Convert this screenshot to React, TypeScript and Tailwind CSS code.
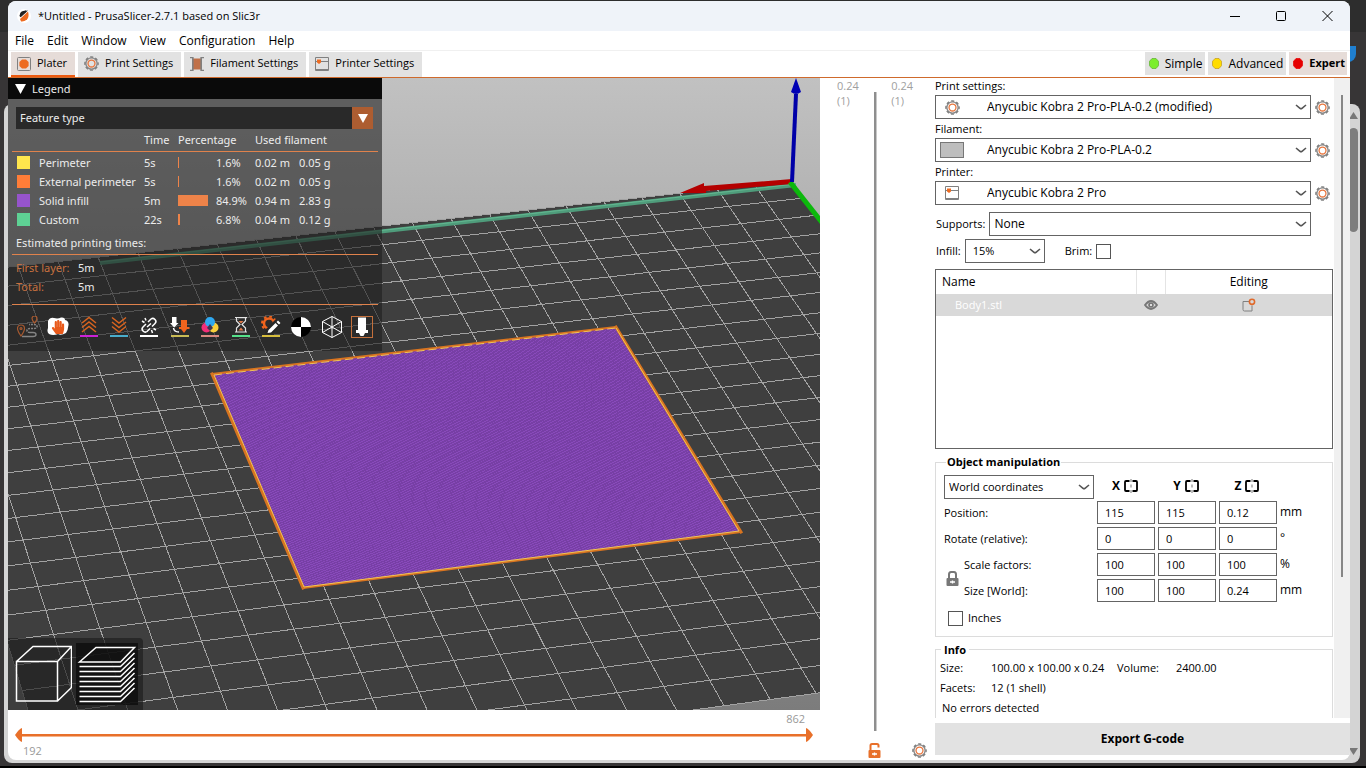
import { useState } from 'react'
import type { ReactNode } from 'react'
import { FaHandPaper } from 'react-icons/fa'

type Pt = [number, number]

const MENUS = ['File', 'Edit', 'Window', 'View', 'Configuration', 'Help']

const FEATURES = [
  { name: 'Perimeter', swatch: 'bg-[#ffe64d]', time: '5s', pct: 1.6, m: '0.02 m', g: '0.05 g' },
  { name: 'External perimeter', swatch: 'bg-[#ff7d38]', time: '5s', pct: 1.6, m: '0.02 m', g: '0.05 g' },
  { name: 'Solid infill', swatch: 'bg-[#9654cc]', time: '5m', pct: 84.9, m: '0.94 m', g: '2.83 g' },
  { name: 'Custom', swatch: 'bg-[#5ed194]', time: '22s', pct: 6.8, m: '0.04 m', g: '0.12 g' }
]

const ROWS = [
  { label: 'Position:', values: ['115', '115', '0.12'], unit: 'mm' },
  { label: 'Rotate (relative):', values: ['0', '0', '0'], unit: '°' },
  { label: 'Scale factors:', values: ['100', '100', '100'], unit: '%' },
  { label: 'Size [World]:', values: ['100', '100', '0.24'], unit: 'mm' }
]

const AXES = ['X', 'Y', 'Z']

/** Perspective map from the four screen corners of a w × h rectangle on the bed. */
function makeProjector(w: number, h: number, p00: Pt, p10: Pt, p11: Pt, p01: Pt): (x: number, y: number) => Pt {
  const dx1 = p10[0] - p11[0]
  const dy1 = p10[1] - p11[1]
  const dx2 = p01[0] - p11[0]
  const dy2 = p01[1] - p11[1]
  const sx = p00[0] - p10[0] + p11[0] - p01[0]
  const sy = p00[1] - p10[1] + p11[1] - p01[1]
  const den = dx1 * dy2 - dx2 * dy1
  const g = (sx * dy2 - dx2 * sy) / den
  const k = (dx1 * sy - sx * dy1) / den
  return (x, y) => {
    const u = x / w
    const v = y / h
    const q = 1 + g * u + k * v
    return [
      (p00[0] + (p10[0] - p00[0] + g * p10[0]) * u + (p01[0] - p00[0] + k * p01[0]) * v) / q,
      (p00[1] + (p10[1] - p00[1] + g * p10[1]) * u + (p01[1] - p00[1] + k * p01[1]) * v) / q
    ]
  }
}

const bed = makeProjector(200, 190, [784, 103], [10, 188], [156, 594], [1055, 477])
const part = makeProjector(100, 100, [608, 249], [205, 296], [294, 510], [732, 454])

const fmt = (p: Pt): string => `${p[0].toFixed(1)} ${p[1].toFixed(1)}`
const BED = 230

let gridPath = ''
for (let i = 0; i <= BED; i += 10) {
  gridPath += `M${fmt(bed(i, 0))}L${fmt(bed(i, BED))}M${fmt(bed(0, i))}L${fmt(bed(BED, i))}`
}

// solid infill, one diagonal per extrusion
let infillPath = ''
for (let s = 0.9; s < 200; s += 0.9) {
  const a = Math.min(s, 100)
  infillPath += `M${fmt(part(a, s - a))}L${fmt(part(s - a, a))}`
}

function Scene(): ReactNode {
  return (
    <svg viewBox="0 0 812 632" preserveAspectRatio="xMinYMin slice" className="absolute inset-0 h-full w-full" aria-hidden="true">
      <defs>
        <linearGradient id="sky" x1="0" y1="0" x2="0" y2="1">
          <stop offset="0" stopColor="#c1c1c1" />
          <stop offset="1" stopColor="#7c7c7c" />
        </linearGradient>
      </defs>
      <rect width="812" height="632" fill="url(#sky)" />
      <path d={`M${fmt(bed(0, 0))}L${fmt(bed(BED, 0))}L${fmt(bed(BED, BED))}L${fmt(bed(0, BED))}Z`} fill="#3f3f3f" />
      <path d={gridPath} stroke="#a2a2a2" strokeWidth="1" fill="none" shapeRendering="crispEdges" />
      <path d="M92 185L788 107" stroke="#4f9c7b" strokeWidth="4" />
      <path d="M92 184L788 106" stroke="#63b791" strokeWidth="1" />
      <path d="M784 101L696 108L696 105L672 115L698 115L698 113L784 106Z" fill="#b40000" />
      <path d="M782 104L816 147" stroke="#0cb80c" strokeWidth="5" />
      <path d="M784 104L788 16" stroke="#0000a8" strokeWidth="4" />
      <path d="M788 0L793 14Q788 18 783 14Z" fill="#0000b4" />
      <path d="M205 296L608 249L732 454L294 510Z" fill="#894abb" />
      <path d={infillPath} stroke="#6f3a9b" strokeWidth="1" fill="none" opacity="0.7" shapeRendering="crispEdges" />
      <path d="M204 296L608 249M733 454L295 510" fill="none" stroke="#d87420" strokeWidth="2" />
      <path d="M204 296L295 510M608 249L733 454" fill="none" stroke="#d87420" strokeWidth="3" strokeLinecap="square" />
      <path d="M206 297L608 250" fill="none" stroke="#f2c552" strokeWidth="1" strokeDasharray="8 4" />
      <path d="M608 250L731 453L296 509L206 297" fill="none" stroke="#f2c552" strokeWidth="1" />
    </svg>
  )
}

function GearIcon(): ReactNode {
  return (
    <svg width="15" height="15" viewBox="0 0 16 16" fill="none" aria-hidden="true" className="shrink-0">
      <circle cx="8" cy="8" r="7" stroke="#808080" strokeWidth="1.6" strokeDasharray="3.2 2.3" strokeDashoffset="1.6" />
      <circle cx="8" cy="8" r="6" stroke="#858585" strokeWidth="1.4" />
      <circle cx="8" cy="8" r="3.7" stroke="#e8773f" strokeWidth="1.4" />
    </svg>
  )
}

function PlaterIcon(): ReactNode {
  return (
    <svg width="14" height="14" viewBox="0 0 14 14" aria-hidden="true" className="shrink-0">
      <rect x="0.5" y="0.5" width="13" height="13" rx="1" fill="none" stroke="#808080" />
      <path d="M5 2.4H9L11.6 5V9L9 11.6H5L2.4 9V5Z" fill="#ed6b21" />
    </svg>
  )
}

function SpoolIcon(): ReactNode {
  return (
    <svg width="14" height="14" viewBox="0 0 14 14" aria-hidden="true" className="shrink-0">
      <rect x="2" y="1.5" width="10" height="11" fill="#c07048" />
      <path d="M0 0.7H3V13.3H0M14 0.7H11V13.3H14" fill="none" stroke="#808080" strokeWidth="1.2" />
      <path d="M2.6 0V14M11.4 0V14" stroke="#808080" strokeWidth="1" />
    </svg>
  )
}

function PrinterIcon(): ReactNode {
  return (
    <svg width="14" height="14" viewBox="0 0 14 14" aria-hidden="true" className="shrink-0">
      <path d="M0.5 0.5H13.5V13.5H0.5ZM0.5 4.5H13.5M0.5 12.5H13.5" fill="none" stroke="#808080" />
      <path d="M2 2.5H6V5.5L4 7L2 5.5Z" fill="#ed6b21" />
    </svg>
  )
}

function LockIcon({ open = false, color }: { open?: boolean; color: string }): ReactNode {
  return (
    <svg width="13" height="15" viewBox="0 0 13 15" aria-hidden="true" className="shrink-0">
      <path d={open ? 'M2.5 8V2.5Q2.5 1 4 1H9Q10.5 1 10.5 2.5V4.5' : 'M3 8V3.5Q3 1 5 1H8Q10 1 10 3.5V8'} fill="none" stroke={color} strokeWidth="2" />
      <rect x="0.5" y="7" width="12" height="8" rx="1" fill={color} />
      <path d="M4 11H9M6.5 9.6V12.4" stroke="#fff" strokeWidth="1.4" />
    </svg>
  )
}

function MirrorIcon(): ReactNode {
  return (
    <svg width="14" height="14" viewBox="0 0 14 14" fill="none" aria-hidden="true">
      <path d="M5.5 2H2Q1 2 1 3V11Q1 12 2 12H5.5M8.5 2H12Q13 2 13 3V11Q13 12 12 12H8.5" stroke="#000" strokeWidth="1.8" />
      <path d="M7 0V3M7 5.5V8.5M7 11V14" stroke="#777" strokeWidth="1" />
    </svg>
  )
}

function Chevron(): ReactNode {
  return (
    <svg width="12" height="6" viewBox="0 0 12 6" fill="none" aria-hidden="true" className="pointer-events-none absolute top-[9px] right-1">
      <path d="M1 1L5 4.3Q6 5 7 4.3L11 1" stroke="#555" strokeWidth="1.6" />
    </svg>
  )
}

function PresetRow({ id, label, value, icon }: { id: string; label: string; value: string; icon: ReactNode }): ReactNode {
  return (
    <div className="mb-0.5">
      <label htmlFor={id} className="block h-[17px] leading-[16px]">
        {label}
      </label>
      <div className="flex items-center gap-[4px]">
        <div className="relative flex-1">
          <select id={id} className="block h-6 w-full appearance-none border border-[#646464] bg-white pl-[51px] text-[12px] leading-[20px]">
            <option>{value}</option>
          </select>
          <span className="pointer-events-none absolute inset-y-0 left-1 flex w-[26px] items-center justify-center">{icon}</span>
          <Chevron />
        </div>
        <button type="button" aria-label={`Edit ${label}`}>
          <GearIcon />
        </button>
      </div>
    </div>
  )
}

function ModeButton({ dot, edge, label, active = false }: { dot: string; edge: string; label: string; active?: boolean }): ReactNode {
  return (
    <button
      type="button"
      className={`flex h-[23px] items-center gap-[6px] pl-1 ${active ? 'bg-[#e6dcd8] pr-[2px] text-[11px] font-bold' : 'bg-[#e2e2e2] pr-[3px] text-[12px]'}`}
    >
      <svg width="10" height="11" viewBox="0 0 10 11" aria-hidden="true">
        <path d="M3 0.5H7L9.5 3.3V7.7L7 10.5H3L0.5 7.7V3.3Z" fill={dot} stroke={edge} strokeWidth="0.7" />
      </svg>
      {label}
    </button>
  )
}

const TOOL_ICONS: { name: string; art: ReactNode }[] = [
  {
    name: 'Travel',
    art: (
      <g fill="none" stroke="#a85a30" strokeWidth="1.2">
        <path d="M4 20Q0.5 15 0.5 12.5A3.5 3.5 0 0 1 7.5 12.5Q7.5 15 4 20Z" />
        <circle cx="4" cy="12.5" r="1" />
        <path d="M17.5 7Q15 4 15 2.5A2.5 2.5 0 0 1 20 2.5Q20 4 17.5 7Z" />
        <path d="M5 20.5H16Q19 20.5 19 18.5T16 16.5H13" stroke="#858585" strokeWidth="1.4" />
        <path d="M13 16.5Q10 16.5 10 14.5T13 12.5H17Q20 12.5 20 10.5T17 8.5H12" stroke="#858585" strokeDasharray="2 1" strokeWidth="1.5" />
      </g>
    )
  },
  {
    name: 'Wipe',
    art: (
      <g>
        <path d="M1 5Q3 1 7 2Q11 3 14 1.5Q18 1 18 4Q22 5 21.5 9Q21 14 19 17Q14 20 11 18Q6 20 2 18Q-0.5 16 1 12Z" fill="#fff" />
        <FaHandPaper x="4" y="4" size={14} color="#e8591a" />
      </g>
    )
  },
  {
    name: 'Retractions',
    art: (
      <g fill="none" stroke="#d9641f" strokeWidth="1.5">
        <path d="M4 7L11 1.5L18 7M4 11.5L11 6L18 11.5M4 16L11 10.5L18 16" />
        <path d="M2 20H20" stroke="#cc22d6" strokeWidth="2" />
      </g>
    )
  },
  {
    name: 'Deretractions',
    art: (
      <g fill="none" stroke="#d9641f" strokeWidth="1.5">
        <path d="M4 1.5L11 7L18 1.5M4 6L11 11.5L18 6M4 10.5L11 16L18 10.5" />
        <path d="M2 20H20" stroke="#49adcb" strokeWidth="2" />
      </g>
    )
  },
  {
    name: 'Seams',
    art: (
      <g fill="none" stroke="#fff" strokeWidth="1.5">
        <path d="M10 6L13 3Q15 1.5 17 3.5T17 7.5L14 10.5M12 12.5L9 15.5Q7 17 5 15T5 11L8 8" />
        <path d="M9 11L13 7.5M4 5L6.5 6.5M7 2L8 4.5M15.5 12.5L18 14M13.5 14L14.5 17" />
        <path d="M2 20H20" strokeWidth="2" />
      </g>
    )
  },
  {
    name: 'Tool changes',
    art: (
      <g>
        <path d="M3 1H7.5V7H9.5L5.2 11.5L1 7H3Z" fill="#fff" />
        <path d="M12 4H18V11H20.5V13H18L15 17L12 13H10V11H12Z" fill="#f0641e" />
        <path d="M4.5 12Q5 16 10 16" stroke="#fff" strokeWidth="1.5" fill="none" />
        <path d="M2 20H20" stroke="#c9bb55" strokeWidth="2" />
      </g>
    )
  },
  {
    name: 'Color changes',
    art: (
      <g>
        <circle cx="7.5" cy="11.5" r="5" fill="#f22d78" />
        <circle cx="14.5" cy="11.5" r="5" fill="#f9cf3c" />
        <circle cx="11" cy="6" r="5" fill="#2fa8f0" />
        <path d="M11 8L14 12L11 15L8 12Z" fill="#3c3454" />
        <path d="M2 20H20" stroke="#d98a80" strokeWidth="2" />
      </g>
    )
  },
  {
    name: 'Pause prints',
    art: (
      <g fill="none" stroke="#e4e4e4" strokeWidth="1.2">
        <path d="M5 1.5H17M5 16H17M6.5 2V5L10 8.5L6.5 12V16M15.5 2V5L12 8.5L15.5 12V16" />
        <path d="M8.5 5H13.5L11 7.5ZM8.5 14.5L11 11.5L13.5 14.5Z" fill="#e07a4a" stroke="none" />
        <path d="M2 20H20" stroke="#55e08a" strokeWidth="2" />
      </g>
    )
  },
  {
    name: 'Custom G-codes',
    art: (
      <g>
        <circle cx="9" cy="7.5" r="5" fill="none" stroke="#f0641e" strokeWidth="2.5" />
        <circle cx="9" cy="7.5" r="7" fill="none" stroke="#f0641e" strokeWidth="2" strokeDasharray="2.7 2.8" />
        <path d="M6 13L16 3L21 8L12 18L5 18Z" fill="#262626" />
        <path d="M8.5 14L15.5 7L18 9.5L11 16.5L7.5 17ZM16.5 6L18 4.5L20.5 7L19 8.5Z" fill="#fff" />
        <path d="M2 20H20" stroke="#d6bd3d" strokeWidth="2" />
      </g>
    )
  },
  {
    name: 'Center of gravity',
    art: (
      <g>
        <circle cx="11" cy="11" r="10" fill="#000" />
        <path d="M11 11V1A10 10 0 0 1 21 11ZM11 11V21A10 10 0 0 1 1 11Z" fill="#fff" />
      </g>
    )
  },
  {
    name: 'Shells',
    art: (
      <g fill="none" stroke="#fff" strokeWidth="1">
        <path d="M11 0.5L20.5 5.5V16.5L11 21.5L1.5 16.5V5.5Z" />
        <path d="M11 0.5V21.5M1.5 5.5L20.5 16.5M20.5 5.5L1.5 16.5" />
      </g>
    )
  },
  {
    name: 'Tool marker',
    art: (
      <g>
        <rect x="0.5" y="0.5" width="21" height="21" fill="none" stroke="#c4703c" />
        <path d="M7 1.5H15V14H17V17H14L12.5 20H9.5L8 17H5V14H7Z" fill="#fff" />
      </g>
    )
  }
]

function Legend(): ReactNode {
  return (
    <section className="absolute top-0 left-0 w-[374px] bg-[#1e1e1e]/60 font-['Noto_Sans',sans-serif] text-[11px] text-[#ececec]">
      <button type="button" className="flex h-[21px] w-full items-center gap-[6px] bg-[#0a0a0a] pt-px pl-[7px]">
        <svg width="11" height="10" viewBox="0 0 11 10" aria-hidden="true">
          <path d="M0 0H11L5.5 10Z" fill="#fff" />
        </svg>
        Legend
      </button>
      <div className="relative mt-2 mr-[9px] ml-2">
        <select aria-label="View type" className="block h-[22px] w-full appearance-none bg-[#292929] pl-1 text-[11px]">
          <option>Feature type</option>
        </select>
        <span className="pointer-events-none absolute inset-y-0 right-0 flex w-[21px] items-center justify-center bg-[#ad5d31]">
          <svg width="10" height="9" viewBox="0 0 10 9" aria-hidden="true">
            <path d="M0 0H10L5 9Z" fill="#fff" />
          </svg>
        </span>
      </div>
      <div className="mx-1">
        <table className="w-full table-fixed text-left">
          <colgroup>
            <col className="w-[27px]" />
            <col className="w-[105px]" />
            <col className="w-[34px]" />
            <col className="w-[38px]" />
            <col className="w-[39px]" />
            <col className="w-[44px]" />
            <col />
          </colgroup>
          <thead>
            <tr className="h-[22px] border-b border-[#e0824c]">
              <th className="p-0" />
              <th className="p-0" />
              <th className="p-0 font-normal">Time</th>
              <th className="p-0 font-normal" colSpan={2}>
                Percentage
              </th>
              <th className="p-0 font-normal" colSpan={2}>
                Used filament
              </th>
            </tr>
          </thead>
          <tbody>
            {FEATURES.map((f) => (
              <tr key={f.name} className="h-[19px]">
                <td className="pt-0.5 pl-[5px]">
                  <div className={`h-[13px] w-[13px] ${f.swatch}`} />
                </td>
                <td className="pt-0.5 leading-[17px] whitespace-nowrap">{f.name}</td>
                <td className="pt-0.5 leading-[17px]">{f.time}</td>
                <td className="pt-0.5">
                  <div className="h-[11px] min-w-px bg-[#ee8349]" style={{ width: Math.round((f.pct / 84.9) * 30) }} />
                </td>
                <td className="pt-0.5 leading-[17px]">{f.pct}%</td>
                <td className="pt-0.5 leading-[17px]">{f.m}</td>
                <td className="pt-0.5 leading-[17px]">{f.g}</td>
              </tr>
            ))}
          </tbody>
        </table>
        <h3 className="mt-1 h-[23px] border-b border-[#e0824c] pl-1 leading-[22px]">Estimated printing times:</h3>
        <dl className="grid h-[50px] grid-cols-[62px_1fr] content-start border-b border-[#e0824c] pt-[3px] pl-1 leading-[19px]">
          <dt className="text-[#c8713f]">First layer:</dt>
          <dd>5m</dd>
          <dt className="text-[#c8713f]">Total:</dt>
          <dd>5m</dd>
        </dl>
        <div className="mx-[5px] flex justify-between pt-[11px] pb-[13px]">
          {TOOL_ICONS.map((t) => (
            <button key={t.name} type="button" aria-label={t.name}>
              <svg width="22" height="22" viewBox="0 0 22 22" aria-hidden="true" className="block">
                {t.art}
              </svg>
            </button>
          ))}
        </div>
      </div>
    </section>
  )
}

function ViewSwitch(): ReactNode {
  const layers = Array.from({ length: 8 }, (_, i) => 20 + i * 5)
  return (
    <div className="absolute bottom-0 left-0 flex h-[72px] gap-1 rounded-tr bg-[#1c1c1c]/65 py-[5px] pr-[5px] pl-1.5">
      <button type="button" aria-label="3D editor view">
        <svg width="58" height="62" viewBox="0 0 58 62" fill="none" stroke="#fff" strokeWidth="1.5" aria-hidden="true">
          <path d="M2.5 18.5H43.5V58H2.5ZM2.5 18.5L19 3.5H57.5L43.5 18.5M57.5 3.5V44.5L43.5 58" />
        </svg>
      </button>
      <button type="button" aria-label="Preview" className="bg-[#0c0c0c]/80">
        <svg width="62" height="62" viewBox="0 0 62 62" fill="none" stroke="#fff" strokeWidth="1.5" aria-hidden="true">
          <path d="M3.5 19L20 4.5H58.5L44.5 19Z" />
          {layers.map((y) => (
            <path key={y} d={`M3.5 ${y + 3.5}H44.5L58.5 ${y - 10}`} />
          ))}
        </svg>
      </button>
    </div>
  )
}

function ObjectManipulation(): ReactNode {
  return (
    <fieldset className="mt-[4px] mr-px border border-[#dcdcdc] px-2 pb-[9px]">
      <legend className="ml-0.5 px-[1px] leading-[18px] font-bold">Object manipulation</legend>
      <div className="mt-1 grid grid-cols-[17px_130px_58px_58px_58px_1fr] gap-x-[3px] gap-y-0.5">
        <div className="relative col-span-2">
          <select aria-label="Coordinate system" className="block h-6 w-full appearance-none border border-[#646464] bg-white pl-1 leading-[20px]">
            <option>World coordinates</option>
          </select>
          <Chevron />
        </div>
        {AXES.map((a) => (
          <div key={a} className="flex items-center justify-center gap-1 pr-0.5 pb-0.5 text-[12px] font-bold">
            {a}
            <button type="button" aria-label={`Mirror ${a}`}>
              <MirrorIcon />
            </button>
          </div>
        ))}
        <span />
        {ROWS.map((row, i) => [
          i === 2 && (
            <button key="lock" type="button" aria-label="Lock scale" className="row-span-2 flex items-center justify-center">
              <LockIcon color="#777" />
            </button>
          ),
          <span key={row.label} className={`leading-6 ${i < 2 ? 'col-span-2' : ''}`}>
            {row.label}
          </span>,
          ...row.values.map((v, k) => (
            <input
              key={`${row.label}${AXES[k]}`}
              aria-label={`${row.label} ${AXES[k]}`}
              defaultValue={v}
              className="h-[23px] w-full border border-[#646464] bg-white px-[7px] outline-none"
            />
          )),
          <span key={`${row.label}unit`} className="text-[12px] leading-[22px]">
            {row.unit}
          </span>
        ])}
      </div>
      <label className="mt-[7px] ml-[4px] flex items-center gap-[5px]">
        <input type="checkbox" className="h-[15px] w-[15px] appearance-none border border-[#555] bg-white" />
        Inches
      </label>
    </fieldset>
  )
}

function Sidebar(): ReactNode {
  return (
    <aside className="flex w-[415px] shrink-0 flex-col pb-[5px] text-[11px]">
      <div className="flex min-h-0 flex-1">
        <div className="flex min-w-0 flex-1 flex-col overflow-hidden">
          <div className="mr-1">
            <PresetRow id="print" label="Print settings:" value="Anycubic Kobra 2 Pro-PLA-0.2 (modified)" icon={<GearIcon />} />
            <PresetRow
              id="filament"
              label="Filament:"
              value="Anycubic Kobra 2 Pro-PLA-0.2"
              icon={<span className="h-4 w-6 border border-[#777] bg-[#bebebe]" />}
            />
            <PresetRow id="printer" label="Printer:" value="Anycubic Kobra 2 Pro" icon={<PrinterIcon />} />
          </div>
          <div className="mt-[5px] mr-[23px] flex items-center gap-1 pl-px">
            <label htmlFor="supports">Supports:</label>
            <div className="relative flex-1">
              <select id="supports" className="block h-6 w-full appearance-none border border-[#646464] bg-white pl-1 text-[12px] leading-[20px]">
                <option>None</option>
              </select>
              <Chevron />
            </div>
          </div>
          <div className="mt-[3px] flex items-center gap-1 pl-px">
            <label htmlFor="infill">Infill:</label>
            <div className="relative w-20">
              <select id="infill" className="block h-6 w-full appearance-none border border-[#646464] bg-white pl-[7px] leading-[20px]">
                <option>15%</option>
              </select>
              <Chevron />
            </div>
            <label className="ml-4 flex items-center gap-1">
              Brim:
              <input type="checkbox" className="h-[15px] w-[15px] appearance-none border border-[#555] bg-white" />
            </label>
          </div>

          <div className="mt-1.5 mr-px h-[180px] shrink-0 border border-[#646464] text-[12px]">
            <table className="w-full table-fixed">
              <colgroup>
                <col />
                <col className="w-[29px]" />
                <col className="w-[167px]" />
              </colgroup>
              <thead>
                <tr className="h-6 text-left">
                  <th className="border-r border-[#e4e4e4] py-0 pl-1.5 font-normal">Name</th>
                  <th className="border-r border-[#e4e4e4] p-0" />
                  <th className="p-0 text-center font-normal">Editing</th>
                </tr>
              </thead>
              <tbody>
                <tr className="h-[22px] bg-[#d9d9d9]">
                  <td className="py-0 pl-[19px] text-[11px] text-white">Body1.stl</td>
                  <td className="p-0">
                    <svg width="14" height="10" viewBox="0 0 14 10" className="mx-auto" aria-hidden="true">
                      <path d="M1 5Q7 -3 13 5Q7 13 1 5Z" fill="#d9d9d9" stroke="#777" strokeWidth="1.8" />
                      <circle cx="7" cy="5" r="2.8" fill="#777" />
                      <circle cx="7" cy="5" r="1" fill="#fff" />
                    </svg>
                  </td>
                  <td className="p-0">
                    <svg width="14" height="14" viewBox="0 0 14 14" fill="none" className="mx-auto" aria-hidden="true">
                      <path d="M7 3.5H1V11.5Q1 13 2.5 13H10V7.5" stroke="#808080" />
                      <circle cx="10" cy="3.8" r="2.6" stroke="#e06a2c" strokeWidth="1.6" />
                    </svg>
                  </td>
                </tr>
              </tbody>
            </table>
          </div>

          <ObjectManipulation />

          <fieldset className="mt-[5px] mr-px shrink-0 border border-[#dcdcdc] px-1 pb-5">
            <legend className="ml-[1px] px-[3px] leading-4 font-bold">Info</legend>
            <div className="grid grid-cols-[51px_126px_59px_1fr] leading-5 whitespace-nowrap">
              <span>Size:</span>
              <span>100.00 x 100.00 x 0.24</span>
              <span>Volume:</span>
              <span>2400.00</span>
              <span>Facets:</span>
              <span className="col-span-3">12 (1 shell)</span>
            </div>
            <p className="pl-0.5 leading-5">No errors detected</p>
          </fieldset>
        </div>
        <div className="w-4 shrink-0 bg-[#f0f0f0] pt-[17px] pl-[7px]">
          <div className="h-[482px] w-0.5 bg-[#868686]" />
        </div>
      </div>
      <button type="button" className="mt-[5px] h-8 shrink-0 bg-[#e2e2e2] text-[12px] font-bold">
        Export G-code
      </button>
    </aside>
  )
}

const TABS = [
  { name: 'Plater', icon: <PlaterIcon /> },
  { name: 'Print Settings', icon: <GearIcon /> },
  { name: 'Filament Settings', icon: <SpoolIcon /> },
  { name: 'Printer Settings', icon: <PrinterIcon /> }
]

export default function App(): ReactNode {
  const [tab, setTab] = useState('Plater')

  return (
    <div className="relative h-screen overflow-hidden bg-[#2d2d2d] font-['Open_Sans',sans-serif] text-[12px] text-black">
      {/* window behind */}
      <div className="absolute inset-x-0 top-8 bottom-0 bg-[#373536]" />
      <div className="absolute top-[46px] right-[10px] h-4 w-6 rounded-br-lg bg-[#1f7fd0]" />
      <div className="absolute top-[104px] right-[6px] bottom-[5px] left-1 rounded-lg bg-[#d4d4d4]">
        <svg width="9" height="7" viewBox="0 0 9 7" className="absolute top-2 right-0.5" aria-hidden="true">
          <path d="M4.5 0L9 7H0Z" fill="#777" />
        </svg>
        <div className="absolute top-6 right-[2px] h-[104px] w-[9px] rounded-full bg-[#7d7d7d]" />
        <svg width="9" height="7" viewBox="0 0 9 7" className="absolute right-0.5 bottom-2" aria-hidden="true">
          <path d="M4.5 7L9 0H0Z" fill="#777" />
        </svg>
      </div>
      <div className="absolute inset-x-0 bottom-0 h-0.5 bg-black" />

      <div className="absolute top-px right-4 bottom-2 left-2 flex flex-col overflow-hidden rounded-lg bg-white">
        <header className="flex h-[30px] shrink-0 items-center bg-[#eff3f9] pl-[9px]">
          <svg width="14" height="14" viewBox="0 0 14 14" aria-hidden="true">
            <circle cx="7" cy="7" r="7" fill="#fff" />
            <path d="M3 8Q2 3 6 2L11 1.5Z" fill="#222" />
            <path d="M3 10L11 2.5Q12.5 8 10 10.5Q7 13 4 12.5Z" fill="#ed6b21" />
            <path d="M3 7.5L9 2" stroke="#222" strokeWidth="2" />
          </svg>
          <h1 className="ml-[7px] flex-1 text-[11px]">*Untitled - PrusaSlicer-2.7.1 based on Slic3r</h1>
          <div className="flex items-center gap-9 pr-[17px]">
            <button type="button" aria-label="Minimize">
              <svg width="10" height="10" viewBox="0 0 10 10" aria-hidden="true">
                <path d="M0 5.5H10" stroke="#000" />
              </svg>
            </button>
            <button type="button" aria-label="Maximize">
              <svg width="10" height="10" viewBox="0 0 10 10" fill="none" aria-hidden="true">
                <rect x="0.5" y="0.5" width="9" height="9" rx="1" stroke="#000" />
              </svg>
            </button>
            <button type="button" aria-label="Close">
              <svg width="11" height="10" viewBox="0 0 11 10" aria-hidden="true">
                <path d="M0.5 0L10.5 10M10.5 0L0.5 10" stroke="#000" />
              </svg>
            </button>
          </div>
        </header>
        <nav className="flex h-5 shrink-0 items-center gap-[13px] border-b border-[#f0f0f0] pl-[7px]">
          {MENUS.map((m) => (
            <button key={m} type="button">
              {m}
            </button>
          ))}
        </nav>
        <div className="flex h-[27px] shrink-0 gap-[3px] border-b border-[#cf6a2c] pt-px pr-[3px] pl-[3px]">
          {TABS.map((t) => (
            <button
              key={t.name}
              type="button"
              onClick={() => setTab(t.name)}
              className={`flex items-center gap-[6px] border-b-2 pr-2 pl-[6px] text-[11px] ${
                tab === t.name ? 'border-[#ed5a10] bg-[#e6dcd8]' : 'border-transparent bg-[#e2e2e2]'
              }`}
            >
              {t.icon}
              {t.name}
            </button>
          ))}
          <div className="ml-auto flex gap-[3px]">
            <ModeButton label="Simple" dot="#7cee2c" edge="#5fae30" />
            <ModeButton label="Advanced" dot="#ffdc00" edge="#c09a20" />
            <ModeButton label="Expert" dot="#e60000" edge="#e60000" active />
          </div>
        </div>

        <main className="flex min-h-0 flex-1">
          <div className="flex min-w-0 flex-1 flex-col">
            <div className="relative flex-1 overflow-hidden">
              <Scene />
              <Legend />
              <ViewSwitch />
            </div>
            <div className="flex h-[50px] shrink-0 flex-col justify-between px-[7px] text-[11px] text-[#999]">
              <output className="block pr-2 text-right leading-[18px]">862</output>
              <div className="flex items-center">
                <svg width="7" height="14" viewBox="0 0 7 14" aria-hidden="true">
                  <path d="M7 0V14Q4 13 0 7Q4 1 7 0Z" fill="#e8702a" />
                </svg>
                <div className="h-[3px] flex-1 border-b border-[#f6b48c] bg-[#e8702a]" />
                <svg width="7" height="14" viewBox="0 0 7 14" aria-hidden="true">
                  <path d="M0 0V14Q3 13 7 7Q3 1 0 0Z" fill="#e8702a" />
                </svg>
              </div>
              <output className="block pl-2 leading-[18px]">192</output>
            </div>
          </div>

          <div className="flex w-[115px] shrink-0 flex-col justify-between pb-0.5 text-[11px] text-[#a0a0a0]">
            <div className="flex flex-1 justify-between pr-[22px] pl-[17px]">
              <output className="leading-[15px]">
                0.24
                <br />
                (1)
              </output>
              <div className="mt-[14px] w-[3px] border-r border-[#c8c8c8] bg-[#8e8e8e]" />
              <output className="leading-[15px]">
                0.24
                <br />
                (1)
              </output>
            </div>
            <div className="mt-3 flex items-center justify-between pr-[8px] pl-12">
              <button type="button" aria-label="Unlock thumbs">
                <LockIcon open color="#e8702a" />
              </button>
              <button type="button" aria-label="Slider settings">
                <GearIcon />
              </button>
            </div>
          </div>

          <Sidebar />
        </main>
      </div>
    </div>
  )
}
